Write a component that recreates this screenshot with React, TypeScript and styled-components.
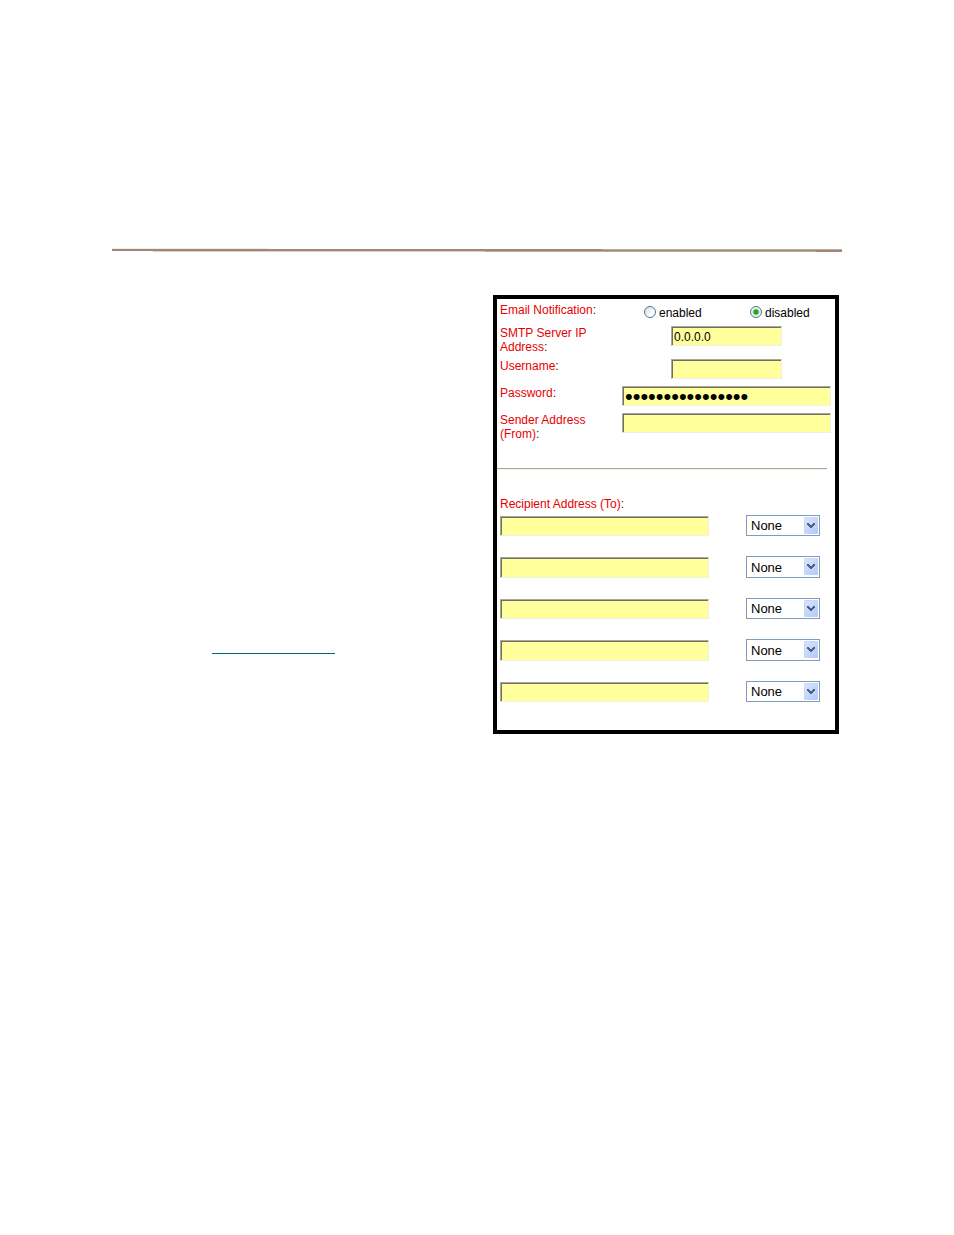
import React, { useState } from 'react';
import styled, { createGlobalStyle } from 'styled-components';

const GlobalStyle = createGlobalStyle`
  * {
    box-sizing: border-box;
  }
  body {
    margin: 0;
    background-color: #fff;
    color: #000;
    font-family: 'Liberation Sans', Arial, sans-serif;
    font-size: 12px;
    line-height: 14px;
  }
`;

const Page = styled.div`
  padding: 248px 112px 64px;
`;

const HeaderRule = styled.svg`
  width: 100%;
  height: 4px;
  display: block;
`;

const Columns = styled.main`
  margin-top: 43px;
  padding-right: 3px;
  display: flex;
  align-items: flex-start;
`;

const Notes = styled.div`
  flex: 1;
  padding: 358px 0 0 100px;
`;

const LinkLine = styled.hr`
  width: 123px;
  height: 1px;
  margin: 0;
  border: 0;
  background-color: #006677;
`;

const Panel = styled.form`
  flex: 0 0 346px;
  padding-bottom: 28px;
  border: 4px solid #000;
`;

const Settings = styled.div`
  padding: 4px 4px 0 3px;
  display: flex;
  flex-direction: column;
  gap: 5px;
`;

const Row = styled.div<{ $short?: boolean }>`
  min-height: ${props => props.$short ? 18 : 22}px;
  display: grid;
  grid-template-columns: 122px 1fr;
  align-items: start;
`;

const Label = styled.label`
  color: #e60000;
  > span {
    color: #222;
  }
`;

const RadioGroup = styled.div`
  padding: 3px 0 0 22px;
  display: grid;
  grid-template-columns: 106px 1fr;
`;

const RadioLabel = styled.label`
  display: flex;
  align-items: flex-start;
  gap: 3px;
`;

const Radio = styled.input`
  appearance: none;
  width: 12px;
  height: 12px;
  margin: 0;
  border: 1px solid #4a7299;
  border-radius: 50%;
  background: linear-gradient(135deg, #dcdcd8, #fff 70%);
  &:checked {
    background: radial-gradient(circle, #21a121 0 2px, #a9dfa9 3px, #f3f5f3 4px);
  }
`;

const TextBox = styled.input<{ $narrow?: boolean }>`
  width: ${props => props.$narrow ? 111 : 209}px;
  height: 20px;
  padding: 1px 2px 0;
  border: 1px solid #f1efe2;
  border-top-color: #aca899;
  border-left-color: #aca899;
  border-radius: 0;
  outline: 0;
  background-color: #ffff9c;
  box-shadow: inset 1px 1px #716f64;
  color: #000;
  font-family: inherit;
  font-size: ${props => props.type === 'password' ? 22 : 12}px;
  justify-self: ${props => props.$narrow ? 'center' : 'start'};
`;

const Divider = styled.hr`
  height: 2px;
  margin: 27px 8px 27px 0;
  border: 0;
  border-top: 1px solid #aca899;
  border-bottom: 1px solid #f5f2e6;
`;

const Recipients = styled.fieldset`
  min-width: 0;
  margin: 0;
  padding: 0 15px 0 3px;
  border: 0;
  > legend {
    padding: 0;
    color: #e60000;
  }
  > legend > span {
    color: #222;
  }
`;

const RecipientList = styled.div`
  padding-top: 4px;
  display: flex;
  flex-direction: column;
  gap: 20px;
`;

const RecipientRow = styled.div`
  height: 21px;
  padding-top: 1px;
  display: flex;
  justify-content: space-between;
  align-items: stretch;
  &:nth-child(even) {
    height: 22px;
  }
  > input {
    height: auto;
  }
`;

const SelectWrap = styled.div`
  width: 74px;
  margin-top: -1px;
  position: relative;
  > svg {
    position: absolute;
    top: 2px;
    right: 2px;
    pointer-events: none;
  }
`;

const Select = styled.select`
  appearance: none;
  width: 100%;
  height: 100%;
  padding: 0 18px 0 4px;
  border: 1px solid #7f9db9;
  border-radius: 0;
  outline: 0;
  background-color: #fff;
  color: #000;
  font-family: inherit;
  font-size: 13px;
`;

const LEVELS = ['None', 'All'];
const RECIPIENTS = [1, 2, 3, 4, 5];

function LevelSelect({ name, label }: { name: string; label: string }) {
  return (
    <SelectWrap>
      <Select name={name} aria-label={label} defaultValue='None'>
        {LEVELS.map(level => <option key={level}>{level}</option>)}
      </Select>
      <svg width='14' height='17' viewBox='0 0 14 17' aria-hidden='true'>
        <defs>
          <linearGradient id='arrowFace' x1='0' y1='0' x2='1' y2='1'>
            <stop offset='0' stopColor='#dce6fd' />
            <stop offset='1' stopColor='#b2c8f8' />
          </linearGradient>
        </defs>
        <rect width='14' height='17' rx='1' fill='url(#arrowFace)' />
        <path d='M0.5 16V1.5Q0.5 0.5 1.5 0.5H13' fill='none' stroke='#c8d6fb' />
        <path d='M3 6H5V7H6V8H8V7H9V6H11V8H10V9H9V10H8V11H6V10H5V9H4V8H3Z' fill='#4d6185' />
      </svg>
    </SelectWrap>
  );
};

function App() {

  const [notify, setNotify] = useState<string>('disabled');

  return (
    <>
      <GlobalStyle />
      <Page>
        <HeaderRule viewBox='0 0 730 4' preserveAspectRatio='none' shapeRendering='crispEdges' aria-hidden='true'>
          <rect width='158' height='1' fill='#f3eeeb' />
          <rect y='1' width='730' height='2' fill='#9e8777' />
          <rect x='490' y='1' width='240' height='1' fill='#b9ab9e' />
          <rect x='41' y='3' width='332' height='1' fill='#dbcfc7' />
          <rect x='373' y='3' width='331' height='1' fill='#b9ab9e' />
          <rect x='704' y='3' width='26' height='1' fill='#9e8777' />
        </HeaderRule>
        <Columns>
          <Notes>
            <LinkLine />
          </Notes>
          <Panel onSubmit={e => e.preventDefault()}>
            <Settings>
              <Row $short role='radiogroup' aria-labelledby='notify-label'>
                <Label as='span' id='notify-label'>Email Notification<span>:</span></Label>
                <RadioGroup>
                  {['enabled', 'disabled'].map(value => (
                    <RadioLabel key={value}>
                      <Radio
                        type='radio'
                        name='notify'
                        value={value}
                        checked={notify === value}
                        onChange={() => setNotify(value)}
                      />
                      {value}
                    </RadioLabel>
                  ))}
                </RadioGroup>
              </Row>
              <Row>
                <Label htmlFor='smtp'>SMTP Server IP<br />Address<span>:</span></Label>
                <TextBox $narrow id='smtp' type='text' defaultValue='0.0.0.0' />
              </Row>
              <Row>
                <Label htmlFor='username'>Username<span>:</span></Label>
                <TextBox $narrow id='username' type='text' />
              </Row>
              <Row>
                <Label htmlFor='password'>Password<span>:</span></Label>
                <TextBox id='password' type='password' defaultValue='xxxxxxxxxxxxxxxx' />
              </Row>
              <Row>
                <Label htmlFor='sender'>Sender Address<br />(From)<span>:</span></Label>
                <TextBox id='sender' type='text' />
              </Row>
            </Settings>
            <Divider />
            <Recipients>
              <legend>Recipient Address (To)<span>:</span></legend>
              <RecipientList>
                {RECIPIENTS.map(n => (
                  <RecipientRow key={n}>
                    <TextBox type='text' name={`recipient${n}`} aria-label={`Recipient ${n}`} />
                    <LevelSelect name={`level${n}`} label={`Level for recipient ${n}`} />
                  </RecipientRow>
                ))}
              </RecipientList>
            </Recipients>
          </Panel>
        </Columns>
      </Page>
    </>
  );
};

export default App;
